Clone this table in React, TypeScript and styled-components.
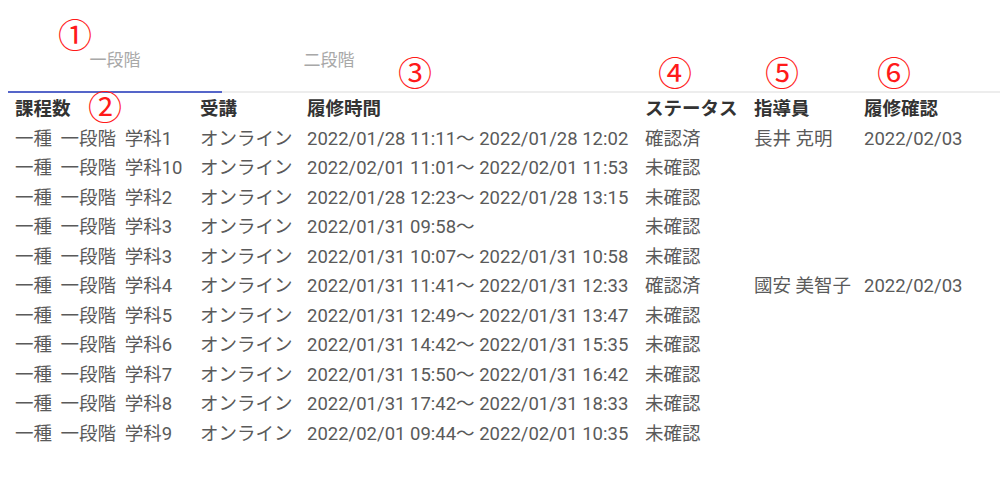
import React from "react";
import styled, { createGlobalStyle } from "styled-components";

const Global = createGlobalStyle`
  html, body { margin: 0; padding: 0; background: #fff; }
  body { font-family: Roboto, "Noto Sans CJK JP", sans-serif; }
`;

const Page = styled.div`
  position: relative;
  width: 1000px;
  height: 480px;
  padding-top: 40px;
  box-sizing: border-box;
`;

const TabBar = styled.div`
  display: flex;
  margin-left: 8px;
  border-bottom: 2px solid #ededed;
`;

const Tab = styled.div<{ $active?: boolean }>`
  width: 214px;
  height: 53px;
  box-sizing: border-box;
  display: flex;
  align-items: center;
  justify-content: center;
  padding-bottom: 14px;
  font-size: 17px;
  color: #a8a8a8;
  margin-bottom: -2px;
  border-bottom: 2px solid ${(p) => (p.$active ? "#5565c9" : "transparent")};
`;

const Table = styled.div`
  display: flex;
  flex-direction: column;
  padding-left: 15px;
`;

const Row = styled.div<{ $head?: boolean }>`
  display: grid;
  grid-template-columns: 185px 107px 338px 109px 110px auto;
  height: 29.5px;
  box-sizing: border-box;
  padding-top: 1px;
  align-items: baseline;
  font-size: 18.5px;
  font-weight: ${(p) => (p.$head ? 700 : 400)};
  color: ${(p) => (p.$head ? "#333" : "#5a5a5a")};
  white-space: nowrap;
`;

const Cell = styled.span<{ $spaced?: boolean }>`
  word-spacing: ${(p) => (p.$spaced ? 4 : 0)}px;
`;

const Mark = styled.span<{ $x: number; $y: number }>`
  position: absolute;
  left: ${(p) => p.$x}px;
  top: ${(p) => p.$y}px;
  font-family: "Noto Sans CJK JP", sans-serif;
  font-size: 34px;
  line-height: 1;
  color: #ff1a1a;
`;

const rows: string[][] = [
  ["一種 一段階 学科1", "オンライン", "2022/01/28 11:11～ 2022/01/28 12:02", "確認済", "長井 克明", "2022/02/03"],
  ["一種 一段階 学科10", "オンライン", "2022/02/01 11:01～ 2022/02/01 11:53", "未確認", "", ""],
  ["一種 一段階 学科2", "オンライン", "2022/01/28 12:23～ 2022/01/28 13:15", "未確認", "", ""],
  ["一種 一段階 学科3", "オンライン", "2022/01/31 09:58～", "未確認", "", ""],
  ["一種 一段階 学科3", "オンライン", "2022/01/31 10:07～ 2022/01/31 10:58", "未確認", "", ""],
  ["一種 一段階 学科4", "オンライン", "2022/01/31 11:41～ 2022/01/31 12:33", "確認済", "國安 美智子", "2022/02/03"],
  ["一種 一段階 学科5", "オンライン", "2022/01/31 12:49～ 2022/01/31 13:47", "未確認", "", ""],
  ["一種 一段階 学科6", "オンライン", "2022/01/31 14:42～ 2022/01/31 15:35", "未確認", "", ""],
  ["一種 一段階 学科7", "オンライン", "2022/01/31 15:50～ 2022/01/31 16:42", "未確認", "", ""],
  ["一種 一段階 学科8", "オンライン", "2022/01/31 17:42～ 2022/01/31 18:33", "未確認", "", ""],
  ["一種 一段階 学科9", "オンライン", "2022/02/01 09:44～ 2022/02/01 10:35", "未確認", "", ""],
];

const head = ["課程数", "受講", "履修時間", "ステータス", "指導員", "履修確認"];

const marks: [string, number, number][] = [
  ["①", 58, 17],
  ["②", 88, 89],
  ["③", 398, 55],
  ["④", 658, 55],
  ["⑤", 765, 55],
  ["⑥", 877, 55],
];

export default function App() {
  return (
    <Page>
      <Global />
      <TabBar>
        <Tab $active>一段階</Tab>
        <Tab>二段階</Tab>
      </TabBar>
      <Table>
        <Row $head>
          {head.map((h) => (
            <Cell key={h}>{h}</Cell>
          ))}
        </Row>
        {rows.map((r, i) => (
          <Row key={i}>
            {r.map((c, j) => (
              <Cell key={j} $spaced={j === 0}>
                {c}
              </Cell>
            ))}
          </Row>
        ))}
      </Table>
      {marks.map(([m, x, y]) => (
        <Mark key={m} $x={x} $y={y}>
          {m}
        </Mark>
      ))}
    </Page>
  );
}
